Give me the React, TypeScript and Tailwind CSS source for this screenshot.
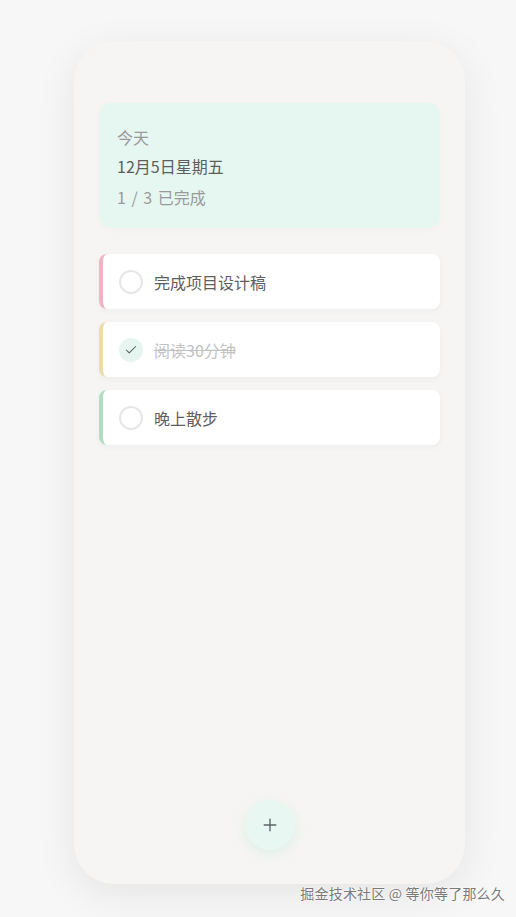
import { Check, Plus } from "lucide-react";

const tasks = [
  { title: "完成项目设计稿", done: false, bar: "border-l-[#eeb4c4]" },
  { title: "阅读30分钟", done: true, bar: "border-l-[#eddca8]" },
  { title: "晚上散步", done: false, bar: "border-l-[#b2dcc6]" },
];

const App = () => {
  const doneCount = tasks.filter((t) => t.done).length;

  return (
    <div
      className="relative min-h-[917px] bg-[#f7f7f7] pt-[41px] pl-[74px]"
      style={{ fontFamily: '"Noto Sans CJK SC", "Noto Sans", sans-serif' }}
    >
      <div className="flex h-[843px] w-[391px] flex-col rounded-[40px] bg-[#f6f5f3] px-[25px] pt-[62px] pb-[34px] shadow-[0_10px_40px_rgba(0,0,0,0.08)]">
        <div className="rounded-xl bg-[#e6f7f1] px-[18px] pt-[23px] pb-[20px] shadow-[0_2px_8px_rgba(0,0,0,0.02)]">
          <div className="text-[16px] leading-[22px] text-[#9a9a9a]">今天</div>
          <div className="mt-[7px] text-[16px] leading-[22px] text-[#5e5e5e]">12月5日星期五</div>
          <div className="mt-[9px] text-[16px] leading-[22px] text-[#9a9a9a] [word-spacing:2px]">
            {doneCount} / {tasks.length} 已完成
          </div>
        </div>

        <div className="mt-[26px] flex flex-col gap-[13px]">
          {tasks.map((task, index) => (
            <div
              key={index}
              className={`flex h-[55px] items-center gap-[11px] rounded-lg border-l-4 bg-white pl-[16px] shadow-[0_2px_6px_rgba(0,0,0,0.04)] ${task.bar}`}
            >
              {task.done ? (
                <div className="flex h-6 w-6 items-center justify-center rounded-full bg-[#e6f5ef]">
                  <Check size={14} strokeWidth={1.8} className="text-[#556060]" />
                </div>
              ) : (
                <div className="h-6 w-6 rounded-full border-2 border-[#e6e6e6] bg-white"></div>
              )}
              <span
                className={`text-[16px] ${
                  task.done ? "text-[#c2c2c2] line-through" : "text-[#5e5e5e]"
                }`}
              >
                {task.title}
              </span>
            </div>
          ))}
        </div>

        <div className="flex-1"></div>

        <div className="flex justify-center">
          <button className="flex h-[50px] w-[50px] items-center justify-center rounded-full bg-[#e8f7f2] shadow-[0_4px_12px_rgba(180,230,215,0.35)]">
            <Plus size={20} strokeWidth={1.6} className="text-[#5a6464]" />
          </button>
        </div>
      </div>

      <div className="absolute right-[11px] top-[883px] text-[14px] leading-[20px] tracking-[0.2px] text-[#7a7a7a] [text-shadow:0_0_2px_#fff,0_0_2px_#fff]">
        掘金技术社区 @ 等你等了那么久
      </div>
    </div>
  );
};

export default App;
